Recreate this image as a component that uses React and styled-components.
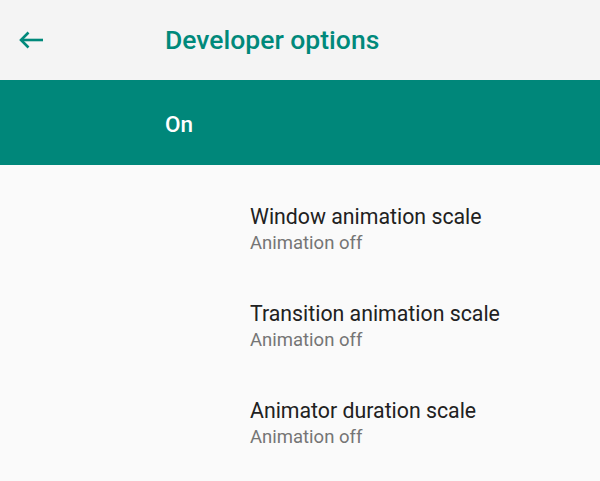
import React from 'react';
import styled, { createGlobalStyle } from 'styled-components';

const GlobalStyle = createGlobalStyle`
  html, body {
    margin: 0;
    padding: 0;
    background: #fafafa;
    font-family: Roboto, "Noto Sans", sans-serif;
  }
`;

const Page = styled.div`
  width: 600px;
  height: 481px;
  overflow: hidden;
  background: #fafafa;
`;

const Toolbar = styled.div`
  height: 80px;
  background: #f4f4f4;
  display: flex;
  align-items: center;
`;

const BackButton = styled.div`
  width: 165px;
  height: 80px;
  display: flex;
  align-items: center;
  padding-left: 18px;
  padding-bottom: 1px;
  box-sizing: border-box;
  color: #00897b;
`;

const Title = styled.h1`
  margin: 0 0 2px 0;
  font-size: 26.5px;
  font-weight: 500;
  color: #00897b;
`;

const SwitchBar = styled.div`
  height: 85px;
  background: #00877a;
  display: flex;
  align-items: center;
  padding-left: 165px;
`;

const SwitchLabel = styled.span`
  font-size: 22.5px;
  font-weight: 500;
  color: #ffffff;
  margin-top: 2px;
`;

const List = styled.div`
  padding-top: 39px;
  display: flex;
  flex-direction: column;
  gap: 46px;
`;

const Item = styled.div`
  padding-left: 250px;
  display: flex;
  flex-direction: column;
  gap: 2px;
`;

const ItemTitle = styled.div`
  font-size: 21.3px;
  color: #212121;
  line-height: 26px;
`;

const ItemSummary = styled.div`
  font-size: 18.5px;
  color: #757575;
  line-height: 23px;
`;

const items = [
  'Window animation scale',
  'Transition animation scale',
  'Animator duration scale',
];

export default function App() {
  return (
    <Page>
      <GlobalStyle />
      <Toolbar>
        <BackButton>
          <svg width="26" height="20" viewBox="0 0 26 20" fill="none" stroke="currentColor" strokeWidth="2.6">
            <path d="M25 10H3.5" />
            <path d="M10.5 2.5L3 10l7.5 7.5" strokeLinejoin="miter" />
          </svg>
        </BackButton>
        <Title>Developer options</Title>
      </Toolbar>
      <SwitchBar>
        <SwitchLabel>On</SwitchLabel>
      </SwitchBar>
      <List>
        {items.map((t) => (
          <Item key={t}>
            <ItemTitle>{t}</ItemTitle>
            <ItemSummary>Animation off</ItemSummary>
          </Item>
        ))}
      </List>
    </Page>
  );
}
